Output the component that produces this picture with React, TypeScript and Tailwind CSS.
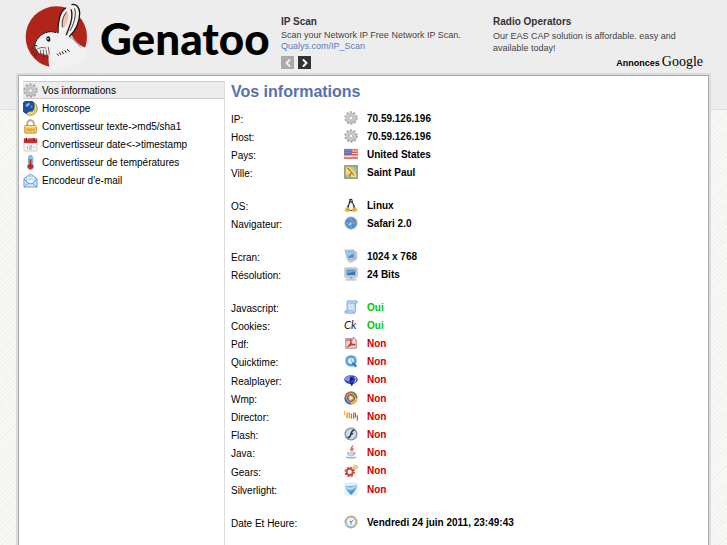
import type { ReactNode } from "react";
import { ChevronLeft, ChevronRight } from "lucide-react";

function Svg({ children }: { children: ReactNode }) {
  return (
    <svg viewBox="0 0 16 16" className="size-full" aria-hidden="true">
      {children}
    </svg>
  );
}

// ICONS
const GearIcon = () => (
  <Svg>
    <circle cx="8" cy="8" r="6.3" fill="none" stroke="#a3a3a3" strokeWidth="2.6" strokeDasharray="2.4 1.558" />
    <circle cx="8" cy="8" r="4.2" fill="none" stroke="#c6c6c6" strokeWidth="4" />
    <circle cx="8" cy="8" r="2" fill="#fafafa" stroke="#9c9c9c" strokeWidth=".7" />
    <path d="M3 10.500c1.500 3.500 7 4.500 10 0" fill="none" stroke="#a8a8a8" strokeWidth=".9" />
  </Svg>
);

const HoroscopeIcon = () => (
  <Svg>
    <circle cx="8" cy="8" r="7.3" fill="#f3d973" stroke="#8a7434" strokeWidth=".8" />
    <path d="M11 1.4A7.3 7.3 0 1 0 3 13.3C5 13 5.500 11 8 11c2.500 0 4-2 4-4.500S12 3 11 1.400Z" fill="#1d4f9f" stroke="#173a73" strokeWidth=".6" />
    <path d="M3 4c1-1.500 3-2 4-1.500S6 6 4.500 6 2.500 5 3 4Z" fill="#8fbbe8" />
    <circle cx="9" cy="6" r="1.500" fill="#3f83cf" />
    <path d="M9.500 11.500h.8M12 10.500h.8" stroke="#6e5722" />
  </Svg>
);

const LockIcon = () => (
  <Svg>
    <path d="M4.500 8V4.800a3.500 3.500 0 0 1 7 0V8" fill="none" stroke="#b9a98a" strokeWidth="2" />
    <rect x="1.800" y="7" width="12.400" height="8.200" rx="1" fill="#f4c653" stroke="#c48f2a" strokeWidth=".9" />
    <path d="M2.500 8.300h11" stroke="#fff0b8" />
    <path d="M4.500 10v3M7 10v3M9 10v3M11.500 10v3M4 11.500h8" stroke="#d39a31" strokeWidth=".8" />
  </Svg>
);

const CalendarIcon = () => (
  <Svg>
    <rect x="1" y="1.500" width="14" height="13.500" rx="1" fill="#f6f6f6" stroke="#b8b8b8" strokeWidth=".7" />
    <path d="M1 1.500h14V6.500H1Z" fill="#d22b2b" />
    <path d="M4 1v3M12 1v3" stroke="#5d0f0f" strokeWidth="1.600" />
    <path d="M5 1.200v2M13 1.200v2" stroke="#fff" strokeWidth=".7" />
    <path d="M5 9v4M7.200 9.300h2V11h-2v2h2.300M11 11h1.500" fill="none" stroke="#a2a2a2" strokeWidth=".9" />
  </Svg>
);

const ThermometerIcon = () => (
  <Svg>
    <path d="M6 2.500a2 2 0 0 1 4 0v7a3.300 3.300 0 1 1-4 0Z" fill="#8cc6f5" stroke="#4f9bd8" strokeWidth=".9" />
    <path d="M8 4.500v7" stroke="#d42015" strokeWidth="2" />
    <circle cx="8" cy="12.200" r="2.700" fill="#d42015" />
    <path d="M10 3.500h2M10 5.500h2M10 7.500h2" stroke="#9fb8cc" strokeWidth=".6" />
  </Svg>
);

const MailIcon = () => (
  <Svg>
    <path d="M1 6l7-5 7 5v9H1Z" fill="#cfe5fb" stroke="#5a97d6" strokeWidth=".9" />
    <path d="M3.500 3.500h9V10L8 12 3.500 10Z" fill="#fff" stroke="#78abe0" strokeWidth=".7" />
    <path d="M5 5.500h6M5 7.200h6" stroke="#8cb9e8" strokeWidth=".8" />
    <path d="M1 6.500l5 4.500h4l5-4.500M1 15l5-4M15 15l-5-4" fill="none" stroke="#5a97d6" strokeWidth=".9" />
  </Svg>
);

const FlagIcon = () => (
  <Svg>
    <path d="M0 2.500h16v11H0Z" fill="#f8e0de" />
    <path d="M0 3.300h16M0 6h16M0 8.800h16M0 12.500h16" stroke="#e0584c" strokeWidth="1.600" />
    <path d="M0 2.500h9v6H0Z" fill="#416fd4" />
    <path d="M1 4.200h7M1 6.500h7" stroke="#c5d6f4" strokeWidth=".8" strokeDasharray="1 1" />
    <path d="M.300 2.500h15.400v11H.300Z" fill="none" stroke="#c08a94" strokeWidth=".5" />
  </Svg>
);

const MapIcon = () => (
  <Svg>
    <rect x="1" y="1" width="14" height="14" fill="#b7cf8e" stroke="#6c7c62" strokeWidth="1.300" />
    <path d="M2 2h4l8 9v3H9L6 9 2 11Z" fill="#f4dd7c" />
    <path d="M2 11l4 3H2ZM10 2h4v5Z" fill="#8fc0b8" />
    <path d="M4 3l7.500 9M9 8l-3 5" fill="none" stroke="#dd5a28" strokeWidth="1.300" />
  </Svg>
);

const LinuxIcon = () => (
  <Svg>
    <path d="M6 1.500C7 .300 9.300.500 9.700 2c.4 2 .3 3 1.500 5s2.300 4 1.300 6-8 2-9 0 .3-4 1.500-6S5.200 3 6 1.500Z" fill="#262626" />
    <path d="M7 5.500c1 .8 1.600.6 2.200 0 .8 2 2 4 1.500 7-1.500 1.500-4 1.500-5.400 0C5 9.500 6.300 7.500 7 5.500Z" fill="#f4f4f4" />
    <path d="M6.500 4h3L8 5.600Z" fill="#efa41d" />
    <path d="M1 12.500l3-2.500 3 4.500-1.500 1.500L1 15ZM15 12.500L12 10l-3 4.500 1.500 1.500L15 15Z" fill="#f0ae25" />
    <path d="M6.800 2.500v1M8.500 2.500v1" stroke="#fff" strokeWidth=".8" />
  </Svg>
);

const SafariIcon = () => (
  <Svg>
    <circle cx="8" cy="8" r="7" fill="#a3abb5" stroke="#7c8b9a" strokeWidth=".7" />
    <circle cx="8" cy="8" r="5.500" fill="#4a92da" stroke="#356ca6" strokeWidth=".6" />
    <path d="M8 3v1.500M8 11.500V13M3 8h1.500M11.500 8H13" stroke="#d6e9fb" strokeWidth=".7" />
    <path d="M11.500 4.500L9 9 7 7Z" fill="#c9809a" />
    <path d="M4.500 11.500L7 7l2 2Z" fill="#c5def5" />
  </Svg>
);

const ScreenIcon = () => (
  <Svg>
    <path d="M11 2.500l3.500 1v8l-4 2.500L7 15.500 5 14l1-3Z" fill="#c9ccd1" stroke="#a6abb3" strokeWidth=".7" />
    <path d="M1 1.500l10.500-.5 1.500 10-9 1.300Z" fill="#c5ced8" stroke="#9aa6b3" strokeWidth=".8" />
    <path d="M3 3l7.500-.5 1 7.200-6.500 1Z" fill="#4295e6" />
    <path d="M3 3l7.500-.5.3 2.500L4 9Z" fill="#8fcaf9" />
  </Svg>
);

const MonitorIcon = () => (
  <Svg>
    <rect x="1" y="1" width="14" height="10.500" rx=".5" fill="#d9dde2" stroke="#98a2ae" strokeWidth=".9" />
    <path d="M3 3h10v6.500H3Z" fill="#3d72b8" />
    <path d="M3 3h10v2L3 7.500Z" fill="#6ea1da" />
    <path d="M6.500 11.500h3l.5 2H6Z" fill="#98a2ad" />
    <path d="M3 13.500h10l1 1.500H2Z" fill="#e2e5e8" stroke="#9aa2ab" strokeWidth=".6" />
  </Svg>
);

const ScriptIcon = () => (
  <Svg>
    <path d="M4 1h10.500c1 0 1 2.500 0 2.500H13V13c0 1-.5 2-1.500 2H2c-1.500 0-1.500-2.500 0-2.500h1.500V3C3.500 2 3 1.500 4 1Z" fill="#c3ddf8" stroke="#6b9fdb" strokeWidth="1" />
    <path d="M5 3.500h8M2 12.500h8c1 0 1 2 1.500 2.500" fill="none" stroke="#6b9fdb" strokeWidth=".8" />
    <path d="M5.500 6h5M5.500 8h5M5.500 10h5" stroke="#e5f1fd" strokeWidth=".9" />
  </Svg>
);

const CookieIcon = () => (
  <Svg>
    <text x="0" y="12.500" fontFamily="Lato, sans-serif" fontStyle="italic" fontSize="13" fill="#222">
      Ck
    </text>
  </Svg>
);

const PdfIcon = () => (
  <Svg>
    <path d="M2 3h8.500V1.500L14 4.500V14H2Z" fill="#f0d6d6" stroke="#a86262" strokeWidth=".9" />
    <path d="M2 3h8v3H2Z" fill="#a9a0a0" />
    <path d="M4 12.500C6.500 11 8.500 7 8 5c-.8-1.500-1 2 1 4s4 1.500 3.500.7S6.500 10 4 12.500Z" fill="none" stroke="#c32d2d" strokeWidth="1.200" />
  </Svg>
);

const QuicktimeIcon = () => (
  <Svg>
    <rect x="1" y="1" width="14" height="14" rx="2" fill="#e8f3fb" />
    <circle cx="8" cy="7.800" r="5" fill="#d9effc" stroke="#4fa3d8" strokeWidth="2.800" />
    <path d="M8 5v3l2 1" fill="none" stroke="#65a9d5" strokeWidth=".9" />
    <path d="M9.500 10l4.500 4.500" stroke="#2d7fb9" strokeWidth="2.800" />
  </Svg>
);

const RealplayerIcon = () => (
  <Svg>
    <ellipse cx="8" cy="7.500" rx="7.700" ry="5" fill="#3445b5" />
    <path d="M1 6.500c2-3.500 7-4.500 9-3-2 .5-3 2-4 5.500C3.500 10 1 8.500 1 6.500Z" fill="#8293e0" />
    <path d="M7 3.500l4 3.500-4 3.500ZM11 11l-2 4.500L6.500 11Z" fill="#141f86" />
    <path d="M12 4.500c2 1.500 2 4 0 6" fill="none" stroke="#c3cdf5" strokeWidth="1.200" />
  </Svg>
);

const WmpIcon = () => (
  <Svg>
    <circle cx="8" cy="8" r="7" fill="#cfd3da" />
    <path d="M8 1.500A6.500 6.500 0 0 0 1.500 8" fill="none" stroke="#c8643b" strokeWidth="2.400" />
    <path d="M1.500 8A6.500 6.500 0 0 0 8 14.500" fill="none" stroke="#3e69b4" strokeWidth="2.400" />
    <path d="M8 14.500A6.500 6.500 0 0 0 14.500 8" fill="none" stroke="#e8b636" strokeWidth="2.400" />
    <path d="M14.500 8A6.500 6.500 0 0 0 8 1.500" fill="none" stroke="#68865b" strokeWidth="2.400" />
    <circle cx="8" cy="8" r="4" fill="#ee9330" stroke="#474052" strokeWidth="1" />
    <path d="M6.500 5.500L10.500 8l-4 2.500Z" fill="#fff" />
  </Svg>
);

const DirectorIcon = () => (
  <Svg>
    <path d="M.800 2v5" stroke="#eaa545" strokeWidth="1.200" />
    <path d="M3.500 4v6.500M6 4v6.500" stroke="#efa12f" strokeWidth="1.700" />
    <path d="M8.500 5v6M11 4v7" stroke="#dc6a33" strokeWidth="1.500" />
    <path d="M13 4v6M15.200 7v6" stroke="#c93a2b" strokeWidth="1.200" />
  </Svg>
);

const FlashIcon = () => (
  <Svg>
    <circle cx="8" cy="8" r="6.800" fill="#b9c4d3" stroke="#7e8b9d" strokeWidth="1.300" />
    <circle cx="8" cy="8" r="5.300" fill="#d5dde7" />
    <path d="M11.800 3.500C8 3.800 8.500 8 7 10.500c-.6 1.200-1.500 1.700-3 1.800M7.500 7.700h3" fill="none" stroke="#27364e" strokeWidth="1.800" />
  </Svg>
);

const JavaIcon = () => (
  <Svg>
    <path d="M9.500.500c1 2-3.500 3.500-1.500 6.500M11 3.500C8.500 5 9 6 9.700 7.200" fill="none" stroke="#d65555" strokeWidth="1.400" />
    <path d="M4 8.500c2 .8 6 .8 7.500 0-.3 3-1 3.500-1.500 4H6C5 12 4.200 11 4 8.500ZM11.500 9c2-.8 2.500 1.500-.8 2.200" fill="#d9e1ef" stroke="#8c9dc0" strokeWidth=".9" />
    <path d="M3 13.500c-2 1.200 9 2 10.500 0" fill="none" stroke="#8c9dc0" strokeWidth="1.300" />
  </Svg>
);

const GearsIcon = () => (
  <Svg>
    <circle cx="6.500" cy="9" r="5" fill="none" stroke="#ca4b42" strokeWidth="2" strokeDasharray="2.200 1.727" />
    <circle cx="6.500" cy="9" r="3.500" fill="#fff" stroke="#ca4b42" strokeWidth="2.200" />
    <circle cx="13" cy="3.500" r="2.200" fill="none" stroke="#dfa63d" strokeWidth="1.500" strokeDasharray="1 .728" />
    <circle cx="13" cy="3.500" r="1.400" fill="#fff" stroke="#dfa63d" />
  </Svg>
);

const SilverlightIcon = () => (
  <Svg>
    <rect x=".500" y=".500" width="15" height="15" fill="#e3eef7" />
    <path d="M1 4c4 1 7 1 14-1-.5 5-3 9-7 11.500C4 12 2 8 1 4Z" fill="#69b4e6" />
    <path d="M1 4c3 3 8 3.500 14-1-2 5-8 7-12 4.500Z" fill="#c4e3f7" />
    <path d="M5 10c3 1.500 5 0 7.500-2.500-1 3-2.500 5.500-4.500 7-1.500-1.500-2.500-3-3-4.500Z" fill="#4a95d2" />
  </Svg>
);

const ClockIcon = () => (
  <Svg>
    <circle cx="8" cy="8" r="6.600" fill="#eaf4fd" stroke="#c9a973" strokeWidth="1.600" />
    <circle cx="8" cy="8" r="5.300" fill="none" stroke="#8eb8df" strokeWidth="1" />
    <path d="M8 11V8l2.500-2M8 8L6.500 6.500" fill="none" stroke="#4c6f92" strokeWidth="1" />
  </Svg>
);

function RabbitLogo() {
  return (
    <svg viewBox="72 6 198 201" className="h-[67px] w-[66px] shrink-0" aria-hidden="true">
      <circle cx="169" cy="111" r="92" fill="#b0241a" />
      {/* ears */}
      <path d="M204 96c2-32 12-52 8-78 12-10 27 2 27 20 0 30-12 54-30 72Z" fill="#f1f1f1" />
      <path d="M173 100c-1-32 6-66 26-77 16 0 19 20 16 38-2 18-8 34-14 46Z" fill="#f1f1f1" />
      <path d="M187 84c-3-24 3-42 13-52 11 10 4 38-9 52Z" fill="#f3c2b0" />
      {/* head and body */}
      <path
        d="M150 207c-4-14-5-24-4-40-14-1-26-4-35-13-6-5-9-13-8-21 8-22 26-38 50-38 8 0 14 1 20 4 12-6 26-4 40 4 8 14 24 36 49 42 6 32-40 67-112 62Z"
        fill="#f1f1f1"
      />
      <g fill="none" stroke="#1b1513" strokeLinecap="round">
        <path d="M104 133c9-24 26-37 48-38 6 0 11 1 15 3" strokeWidth="3" />
        <path d="M104 134c0 9 2 15 8 20M103 135l8 3" strokeWidth="3" />
        <path d="M174 98c-1-32 6-64 23-74M214 30c6 24-5 50-15 74" strokeWidth="4" />
        <path d="M216 14c13-4 22 9 23 24 0 30-13 54-30 71" strokeWidth="4" />
        <path d="M187 80c-2-20 4-34 12-42M224 26c7 18-4 52-14 66" strokeWidth="2.500" />
        <path d="M209 110c12 5 20 20 32 30" strokeWidth="1.500" />
        <path d="M172 162l3 4M179 158l3 6M187 155l3 6M195 152l3 5M202 149l6 5" strokeWidth="3" />
      </g>
      {/* whiskers */}
      <g fill="none" stroke="#3d1a16" strokeWidth="2" strokeLinecap="round">
        <path d="M110 149c8-7 16-8 28-5M113 155l-4 12M122 151l-1 14M130 150l1 24M138 150l4 22M145 142l3 20" />
        <path d="M98 143l-4 6M101 150l-5 9M106 156l-3 10M124 160c6 4 14 6 20 6" />
      </g>
      <ellipse cx="145" cy="117" rx="6" ry="8" fill="#151515" transform="rotate(-15 145 117)" />
      <circle cx="144" cy="116" r="2.500" fill="#ddd" />
    </svg>
  );
}

// DATA
const menu = [
  { label: "Vos informations", icon: <GearIcon /> },
  { label: "Horoscope", icon: <HoroscopeIcon /> },
  { label: "Convertisseur texte->md5/sha1", icon: <LockIcon /> },
  { label: "Convertisseur date<->timestamp", icon: <CalendarIcon /> },
  { label: "Convertisseur de températures", icon: <ThermometerIcon /> },
  { label: "Encodeur d'e-mail", icon: <MailIcon /> },
];

interface InfoRow {
  label: string;
  value: string;
  icon: ReactNode;
}

const groups: InfoRow[][] = [
  [
    { label: "IP", value: "70.59.126.196", icon: <GearIcon /> },
    { label: "Host", value: "70.59.126.196", icon: <GearIcon /> },
    { label: "Pays", value: "United States", icon: <FlagIcon /> },
    { label: "Ville", value: "Saint Paul", icon: <MapIcon /> },
  ],
  [
    { label: "OS", value: "Linux", icon: <LinuxIcon /> },
    { label: "Navigateur", value: "Safari 2.0", icon: <SafariIcon /> },
  ],
  [
    { label: "Ecran", value: "1024 x 768", icon: <ScreenIcon /> },
    { label: "Résolution", value: "24 Bits", icon: <MonitorIcon /> },
  ],
  [
    { label: "Javascript", value: "Oui", icon: <ScriptIcon /> },
    { label: "Cookies", value: "Oui", icon: <CookieIcon /> },
    { label: "Pdf", value: "Non", icon: <PdfIcon /> },
    { label: "Quicktime", value: "Non", icon: <QuicktimeIcon /> },
    { label: "Realplayer", value: "Non", icon: <RealplayerIcon /> },
    { label: "Wmp", value: "Non", icon: <WmpIcon /> },
    { label: "Director", value: "Non", icon: <DirectorIcon /> },
    { label: "Flash", value: "Non", icon: <FlashIcon /> },
    { label: "Java", value: "Non", icon: <JavaIcon /> },
    { label: "Gears", value: "Non", icon: <GearsIcon /> },
    { label: "Silverlight", value: "Non", icon: <SilverlightIcon /> },
  ],
  [{ label: "Date Et Heure", value: "Vendredi 24 juin 2011, 23:49:43", icon: <ClockIcon /> }],
];

const valueColor = (value: string) => {
  if (value === "Oui") return "text-[#00c800]";
  if (value === "Non") return "text-[#cc0000]";
  return "text-black";
};

function Ads() {
  return (
    <aside className="flex flex-1 pt-4 text-[9px] leading-3 text-[#444]">
      <div className="w-[212px] shrink-0">
        <h2 className="mb-0.5 text-[10px] font-bold text-[#333]">IP Scan</h2>
        <p className="leading-[11px]">Scan your Network IP Free Network IP Scan.</p>
        <a href="#" className="block leading-[11px] text-[#5a7abf]">Qualys.com/IP_Scan</a>
        <div className="mt-1 flex gap-1">
          <button aria-label="Précédent" className="flex size-[13px] items-center justify-center bg-[#aaa] text-[#eee]">
            <ChevronLeft size={12} strokeWidth={4} />
          </button>
          <button aria-label="Suivant" className="flex size-[13px] items-center justify-center bg-[#333] text-white">
            <ChevronRight size={12} strokeWidth={4} />
          </button>
        </div>
      </div>
      <div className="flex-1">
        <h2 className="mb-0.5 text-[10px] font-bold text-[#333]">Radio Operators</h2>
        <p className="max-w-[204px]">Our EAS CAP solution is affordable. easy and available today!</p>
        <p className="flex items-baseline justify-end gap-0.5 pt-0.5 pr-2 text-black">
          <span className="font-bold">Annonces</span>
          <span className="font-['Liberation_Serif',serif] text-[14px]">Google</span>
        </p>
      </div>
    </aside>
  );
}

export default function App() {
  return (
    <div className="flex min-h-screen flex-col bg-[linear-gradient(#ededed_109px,#dedede_109px,#dedede_110px,transparent_110px),repeating-linear-gradient(135deg,#f8f8f6_0_2px,#f0f0ed_2px_3px)] px-4 font-['Liberation_Sans',Arial,sans-serif] text-[10px] text-black">
      <header className="flex h-[73px] items-start">
        <div className="flex w-[265px] shrink-0 gap-[10px] pt-0.5 pl-2">
          <RabbitLogo />
          <h1 className="pt-2 font-[Lato,sans-serif] text-[44px] leading-[56px] font-black text-black">Genatoo</h1>
        </div>
        <Ads />
      </header>

      <div className="flex flex-1 flex-col border-2 border-b-0 border-[#dcdcdc]">
        <div className="flex flex-1 border border-b-0 border-[#aaa] bg-white pt-[5px] pl-1">
          <nav className="w-[202px] shrink-0 border-r border-[#ddd]">
            <ul>
              {menu.map((item, i) => (
                <li key={item.label}>
                  <a
                    href="#"
                    className={`flex h-[18px] items-center gap-1 ${
                      i === 0 ? "border-y border-[#ccc] bg-[#ededed]" : ""
                    }`}
                  >
                    <span className="size-[15px]">{item.icon}</span>
                    {item.label}
                  </a>
                </li>
              ))}
            </ul>
          </nav>

          <main className="flex-1 pl-1.5">
            <h2 className="mb-[7px] text-[16px] leading-[21px] font-bold text-[#5572ad]">Vos informations</h2>
            <table className="border-collapse">
              {groups.map((rows, i) => (
                <tbody key={i} className="after:block after:h-[15px]">
                  {rows.map((row) => (
                    <tr key={row.label} className="h-[18px] nth-[5n]:h-[19px]">
                      <th scope="row" className="w-[113px] p-0 pt-1 text-left leading-[14px] font-normal">
                        {row.label}:
                      </th>
                      <td className="w-[23px] p-0">
                        <div className="size-[14px]">{row.icon}</div>
                      </td>
                      <td className={`p-0 pt-px leading-4 font-bold ${valueColor(row.value)}`}>{row.value}</td>
                    </tr>
                  ))}
                </tbody>
              ))}
            </table>
          </main>
        </div>
      </div>
    </div>
  );
}
